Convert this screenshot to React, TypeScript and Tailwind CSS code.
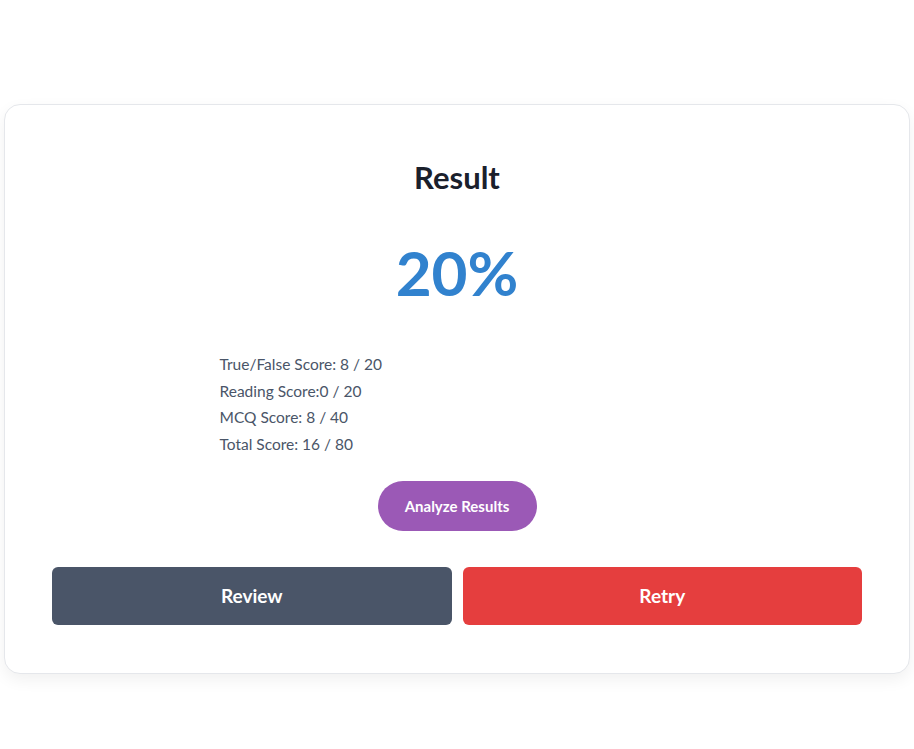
export default function App() {
    const scores = [
        'True/False Score: 8 / 20',
        'Reading Score:0 / 20',
        'MCQ Score: 8 / 40',
        'Total Score: 16 / 80',
    ];

    return (
        <div className="min-h-screen bg-white px-[4px] pt-[104px] font-['Lato','Noto_Sans',sans-serif]">
            <div className="rounded-2xl border border-gray-200 bg-white px-[47px] pt-[54px] pb-[48px] shadow-[0_6px_16px_rgba(0,0,0,0.06)]">
                <h2 className="text-center text-[31px] leading-[36px] font-bold text-[#1a202c]">
                    Result
                </h2>

                <div className="mt-[41px] text-center text-[62px] leading-[72px] font-bold text-[#3182ce]">
                    20%
                </div>

                <div className="mx-auto mt-[43px] w-[475px] text-[15.5px] leading-[26.5px] text-[#4a5568]">
                    {scores.map((s) => (
                        <p key={s}>{s}</p>
                    ))}
                </div>

                <div className="mt-[24px] flex justify-center">
                    <button className="h-[50px] w-[159px] rounded-full bg-[#9b59b6] text-[15px] font-bold text-white">
                        Analyze Results
                    </button>
                </div>

                <div className="mt-[36px] grid grid-cols-2 gap-[11px]">
                    <button className="h-[58px] rounded-md bg-[#4a5568] text-[19px] font-bold text-white">
                        Review
                    </button>
                    <button className="h-[58px] rounded-md bg-[#e53e3e] text-[19px] font-bold text-white">
                        Retry
                    </button>
                </div>
            </div>
        </div>
    );
}
